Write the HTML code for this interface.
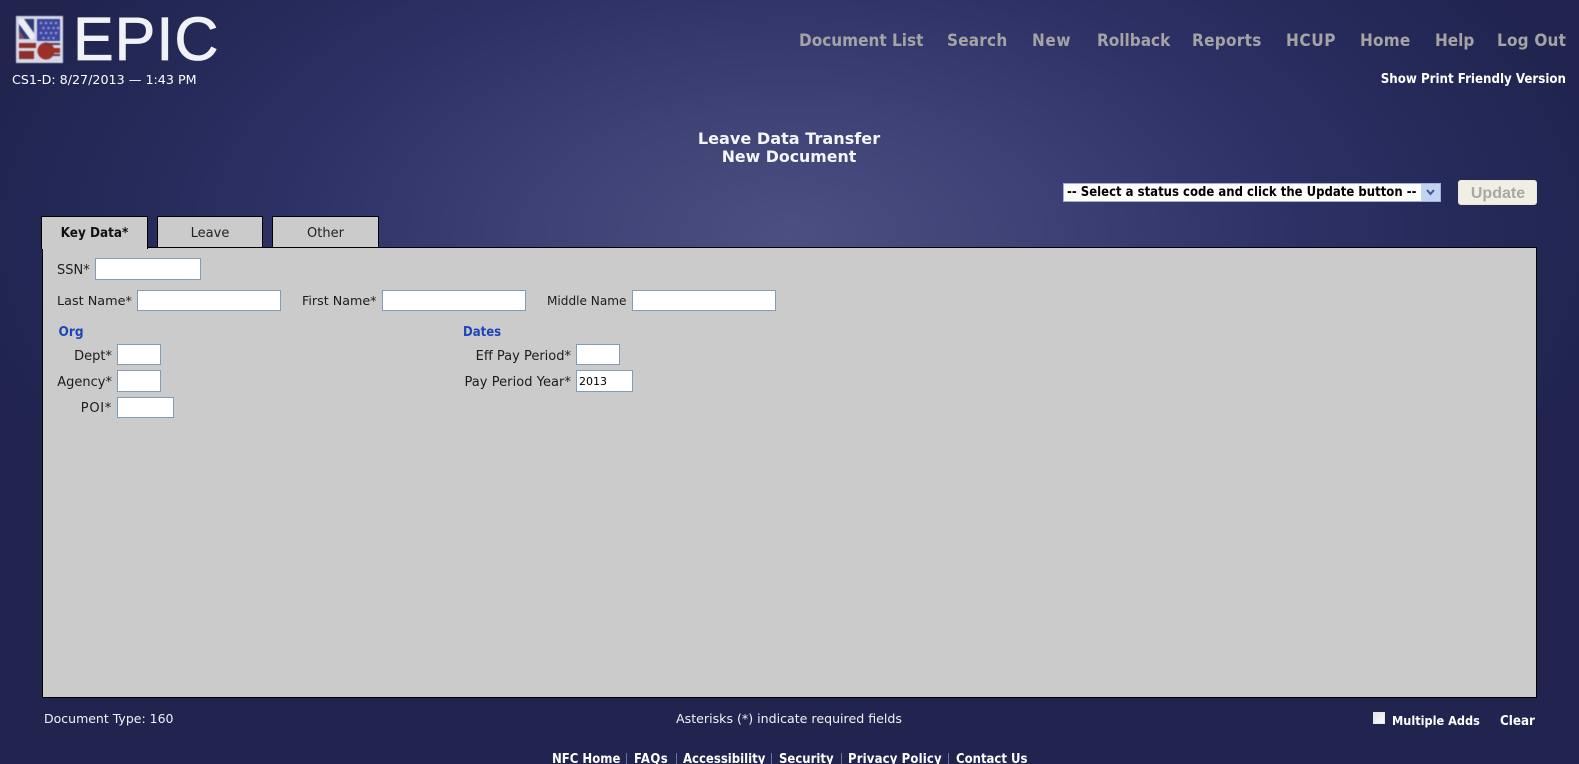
<!DOCTYPE html>
<html>
<head>
<meta charset="utf-8">
<title>EPIC</title>
<style>
html,body{margin:0;padding:0;width:1579px;height:764px;overflow:hidden;background:#1f2350}
body{position:relative;font-family:"DejaVu Sans","Liberation Sans",sans-serif;font-size:13px;
background:radial-gradient(ellipse 830px 440px at 790px 235px,#4b4f81 0%,#3d4175 30%,#2c3064 62%,#20244f 100%) #1f2350}
.t{position:absolute;white-space:nowrap;line-height:16px;height:16px}
.b{font-weight:bold;font-family:"DejaVu Sans Condensed","DejaVu Sans",sans-serif}
.w{color:#fff}
.k{color:#1c1c1c}
.r{text-align:right}
.c{text-align:center}
.n{color:#a4a4a4;font-weight:bold;font-size:17px;line-height:20px;height:20px;top:31px;font-family:"DejaVu Sans Condensed","DejaVu Sans",sans-serif}
.i{position:absolute;box-sizing:border-box;background:#fff;border:1px solid #7f9db9;font-size:11px;line-height:21px;padding-left:2px;color:#000}
.h{color:#1d45b8}
.tab{position:absolute;box-sizing:border-box;background:#cbcbcb;border:1px solid #000;text-align:center;color:#222}
.s{position:absolute;top:753px;width:1px;height:11px;background:#6d7096}
</style>
</head>
<body>

<svg style="position:absolute;left:16px;top:16px;filter:blur(.5px)" width="47" height="47" viewBox="0 0 47 47">
<rect width="47" height="47" fill="#d6d8e6"/>
<rect x="3" y="3" width="15" height="20" fill="#2d3a78"/>
<path d="M3 3h5l10 14v6h-4L3 8z" fill="#eceef4"/>
<path d="M3 14l6 9H3z" fill="#7d4a66"/>
<rect x="21" y="3" width="23" height="22" fill="#3c45a0"/>
<g fill="#8f96d0">
<circle cx="25" cy="7" r="1.300"/><circle cx="30" cy="7" r="1.300"/><circle cx="35" cy="7" r="1.300"/><circle cx="40" cy="7" r="1.300"/>
<circle cx="27.500" cy="12" r="1.300"/><circle cx="32.500" cy="12" r="1.300"/><circle cx="37.500" cy="12" r="1.300"/><circle cx="42" cy="12" r="1.300"/>
<circle cx="25" cy="17" r="1.300"/><circle cx="30" cy="17" r="1.300"/><circle cx="35" cy="17" r="1.300"/><circle cx="40" cy="17" r="1.300"/>
<circle cx="27.500" cy="22" r="1.300"/><circle cx="32.500" cy="22" r="1.300"/><circle cx="37.500" cy="22" r="1.300"/>
</g>
<path d="M3 27h17v5H3zM3 35h15v8H3z" fill="#8f2f2c"/>
<circle cx="30" cy="35" r="8.500" fill="#9c2f28"/>
<path d="M34 32h10v5H34z" fill="#9c2f28"/>
<path d="M27 27h17v2H32zM37 38h7v2h-7z" fill="#5d3650"/>
</svg>
<div class="t" style="left:73px;top:6px;height:66px;line-height:66px;font-family:'Liberation Sans',sans-serif;font-size:61px;color:#f1f2f7;letter-spacing:1px;-webkit-text-stroke:.8px #f1f2f7">EPIC</div>
<div class="t" style="left:12px;top:72px;color:#fff;font-size:12.700px">CS1-D: 8/27/2013 — 1:43 PM</div>

<div class="t n" style="left:799px">Document List</div>
<div class="t n" style="left:947px;letter-spacing:.2px">Search</div>
<div class="t n" style="left:1032px;letter-spacing:.6px">New</div>
<div class="t n" style="left:1097px">Rollback</div>
<div class="t n" style="left:1192px;letter-spacing:.3px">Reports</div>
<div class="t n" style="left:1286px;letter-spacing:.6px">HCUP</div>
<div class="t n" style="left:1360px;letter-spacing:.2px">Home</div>
<div class="t n" style="left:1435px">Help</div>
<div class="t n" style="left:1497px;letter-spacing:.2px">Log Out</div>
<div class="t b w r" style="right:13px;top:72px;font-size:13.200px">Show Print Friendly Version</div>

<div class="t c" style="left:589px;width:400px;top:130px;height:18px;line-height:18px;font-size:16.100px;font-weight:bold;color:#f4f6fb">Leave Data Transfer</div>
<div class="t c" style="left:589px;width:400px;top:148px;height:18px;line-height:18px;font-size:15.800px;font-weight:bold;color:#f4f6fb">New Document</div>

<div style="position:absolute;left:1063px;top:183px;width:378px;height:19px;background:#fff;box-sizing:border-box;border:1px solid #9db2d8"></div>
<div class="t b" style="left:1067px;top:185px;color:#000;font-size:13px">-- Select a status code and click the Update button --</div>
<svg style="position:absolute;left:1421px;top:184px" width="19" height="17" viewBox="0 0 19 17"><rect width="19" height="17" fill="#c3d3f2"/><path d="M6 6l3.500 4 3.500-4" fill="none" stroke="#3a5a9c" stroke-width="2"/></svg>
<div style="position:absolute;left:1458px;top:180px;width:79px;height:25px;box-sizing:border-box;background:#f1efe4;border:1px solid #e8e6dc;border-radius:3px;text-align:center;line-height:25px;padding-left:1px;color:#a8a8a4;font-weight:bold;font-size:16px;font-family:'Liberation Sans',sans-serif">Update</div>

<div style="position:absolute;left:42px;top:247px;width:1495px;height:451px;box-sizing:border-box;background:#cbcbcb;border:1px solid #000"></div>
<div class="tab" style="left:41px;top:216px;width:107px;height:33px;border-bottom:0;line-height:34px;color:#111;z-index:2"><span class="b" style="font-size:13.400px">Key Data*</span></div>
<div class="tab" style="left:157px;top:216px;width:106px;height:32px;line-height:33px">Leave</div>
<div class="tab" style="left:272px;top:216px;width:107px;height:32px;line-height:33px">Other</div>

<div class="t k" style="left:57px;top:263px">SSN*</div>
<div class="i" style="left:95px;top:258px;width:106px;height:22px"></div>

<div class="t k" style="left:57px;top:294px;font-size:12.800px">Last Name*</div>
<div class="i" style="left:137px;top:290px;width:144px;height:21px"></div>
<div class="t k" style="left:302px;top:293px;font-size:12.700px">First Name*</div>
<div class="i" style="left:382px;top:290px;width:144px;height:21px"></div>
<div class="t k" style="left:547px;top:293px;font-size:12.100px">Middle Name</div>
<div class="i" style="left:632px;top:290px;width:144px;height:21px"></div>

<div class="t b h" style="left:58.500px;top:324px;font-size:13.500px">Org</div>
<div class="t k r" style="left:12px;width:100px;top:349px">Dept*</div>
<div class="i" style="left:117px;top:344px;width:44px;height:21px"></div>
<div class="t k r" style="left:12px;width:100px;top:375px">Agency*</div>
<div class="i" style="left:117px;top:370px;width:44px;height:22px"></div>
<div class="t k r" style="left:12px;width:100px;top:401px;letter-spacing:.7px">POI*</div>
<div class="i" style="left:117px;top:397px;width:57px;height:21px"></div>

<div class="t b h" style="left:463px;top:325px">Dates</div>
<div class="t k r" style="left:420px;width:151px;top:349px">Eff Pay Period*</div>
<div class="i" style="left:576px;top:344px;width:44px;height:21px"></div>
<div class="t k r" style="left:420px;width:151px;top:375px;letter-spacing:.05px">Pay Period Year*</div>
<div class="i" style="left:576px;top:370px;width:57px;height:22px">2013</div>

<div class="t" style="left:44px;top:711px;color:#f2f2f6;font-size:12.500px">Document Type: 160</div>
<div class="t c" style="left:589px;width:400px;top:711px;color:#f2f2f6;font-size:12.600px">Asterisks (*) indicate required fields</div>
<div style="position:absolute;left:1373px;top:712px;width:12px;height:12px;background:linear-gradient(135deg,#dfe3ea,#fbfbf8);border:1px solid #e8e8e8;box-sizing:border-box"></div>
<div class="t b w" style="left:1392px;top:713px;font-size:12.600px">Multiple Adds</div>
<div class="t b w" style="left:1500px;top:714px;font-size:13.300px">Clear</div>

<div class="t b w" style="left:552px;top:752px">NFC Home</div>
<div class="s" style="left:626px"></div>
<div class="t b w" style="left:634px;top:752px;letter-spacing:.4px">FAQs</div>
<div class="s" style="left:676px"></div>
<div class="t b w" style="left:683px;top:752px">Accessibility</div>
<div class="s" style="left:771px"></div>
<div class="t b w" style="left:779px;top:752px">Security</div>
<div class="s" style="left:841px"></div>
<div class="t b w" style="left:848px;top:752px;letter-spacing:.15px">Privacy Policy</div>
<div class="s" style="left:948px"></div>
<div class="t b w" style="left:956px;top:752px">Contact Us</div>

</body>
</html>
